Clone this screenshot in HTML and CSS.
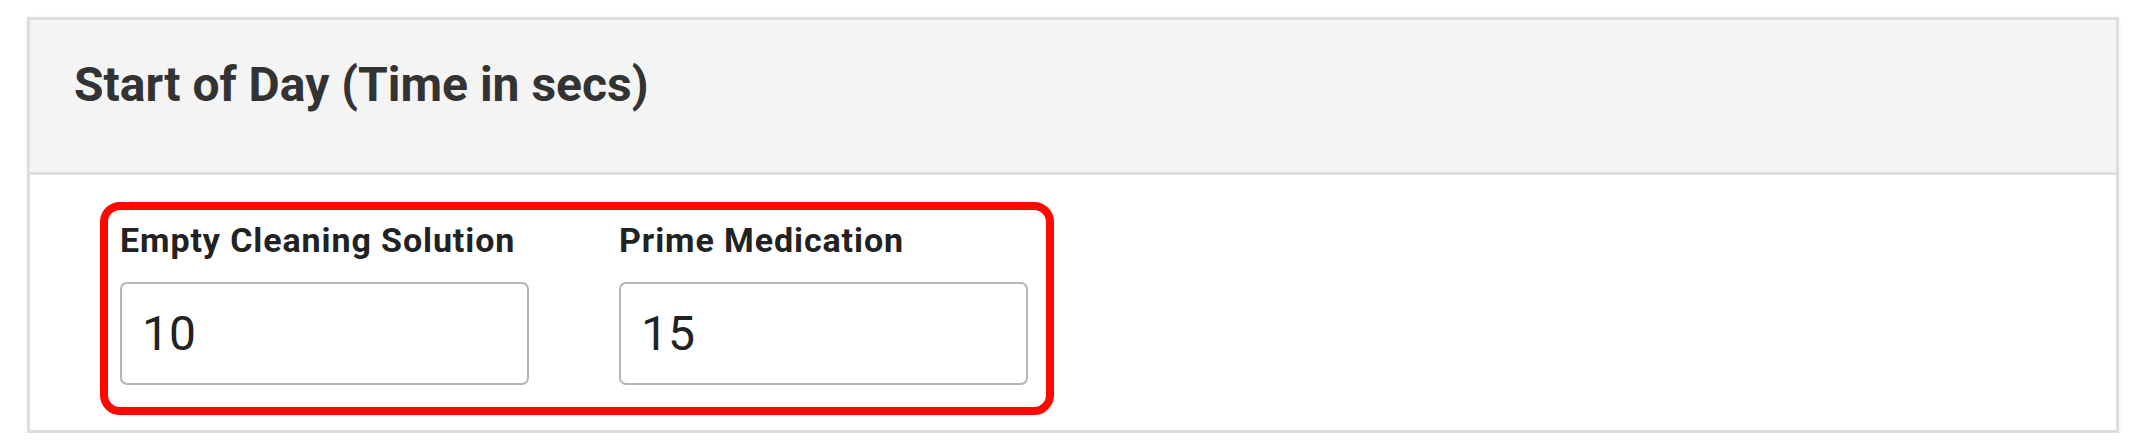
FILE: index.html
```html
<!DOCTYPE html>
<html lang="en">

<head>
    <meta charset="UTF-8">
    <meta
        name="viewport"
        content="width=device-width, initial-scale=1.0"
    >
    <title>Start of Day</title>
    <link rel="stylesheet" href="styles.css">
</head>

<body>
    <section class="panel">
        <header class="panel-heading">
            <h3>Start of Day (Time in secs)</h3>
        </header>
        <div class="panel-body">
            <form class="highlight">
                <div class="field">
                    <label for="empty-cleaning">Empty Cleaning Solution</label>
                    <input
                        type="text"
                        id="empty-cleaning"
                        value="10"
                    />
                </div>
                <div class="field">
                    <label for="prime-medication">Prime Medication</label>
                    <input
                        type="text"
                        id="prime-medication"
                        value="15"
                    />
                </div>
            </form>
        </div>
    </section>
</body>

</html>
```

FILE: styles.css
```css
body {
    font-family: Roboto, "Liberation Sans", Arial, sans-serif;
    margin: 0;
    /* Card sits a little off the page edges */
    padding: 17px 15px 0 27px;
    background-color: white;
}

.panel {
    border: 3px solid #dedede;
    background-color: #fff;
    box-shadow: 0 1px 4px rgba(0, 0, 0, 0.08);
}

.panel-heading {
    padding: 37px 44px 59px;
    background-color: #f4f4f4;
    border-bottom: 3px solid #dedede;
}

.panel-heading h3 {
    margin: 0;
    font-size: 48px;
    line-height: 56px;
    font-weight: 700;
    color: #333;
}

.panel-body {
    padding: 27px 0 15px 70px;
}

/* The red frame round the two fields */
.highlight {
    display: inline-flex;
    gap: 90px;
    padding: 11px 18px 22px 12px;
    border: 8px solid #ff0800;
    border-radius: 20px;
}

.field {
    display: flex;
    flex-direction: column;
    width: 409px;
}

.field label {
    font-size: 34px;
    line-height: 38px;
    letter-spacing: 0.9px;
    font-weight: 700;
    color: #222;
    margin-bottom: 23px;
    white-space: nowrap;
}

.field input {
    box-sizing: border-box;
    width: 100%;
    height: 103px;
    padding: 0 20px;
    border: 2px solid #b5b5b5;
    border-radius: 7px;
    font-family: inherit;
    font-size: 48px;
    color: #222;
    background-color: #fff;
    outline: none;
}
```
